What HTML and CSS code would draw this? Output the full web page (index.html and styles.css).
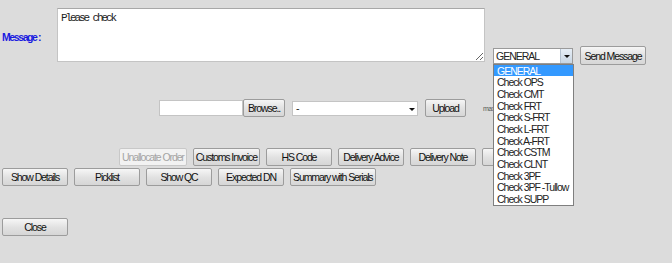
FILE: index.html
```html
<!DOCTYPE html>
<html lang="en">
<head>
  <meta charset="UTF-8" />
  <title>Order Messages</title>
  <link rel="stylesheet" href="styles.css">
</head>
<body>
  <div class="page">
    <div class="msg-row">
      <label class="msg-label" for="msgText">Message :</label>
      <textarea id="msgText" class="msg-text">Please check</textarea>
      <div class="send-group">
        <div class="combo">
          <span class="combo-value">GENERAL</span>
          <span class="combo-arrow"></span>
          <ul class="combo-list">
            <li class="selected">GENERAL</li>
            <li>Check OPS</li>
            <li>Check CMT</li>
            <li>Check FRT</li>
            <li>Check S-FRT</li>
            <li>Check L-FRT</li>
            <li>Check A-FRT</li>
            <li>Check CSTM</li>
            <li>Check CLNT</li>
            <li>Check 3PF</li>
            <li>Check 3PF -Tullow</li>
            <li>Check SUPP</li>
          </ul>
        </div>
        <button class="btn btn-send">Send Message</button>
      </div>
    </div>

    <div class="upload-row">
      <input type="text" class="file-path" />
      <button class="btn btn-browse">Browse..</button>
      <div class="doc-type">
        <span>-</span>
        <span class="doc-arrow"></span>
      </div>
      <button class="btn btn-upload">Upload</button>
      <span class="max-note">max</span>
    </div>

    <div class="btn-row btn-row-top">
      <button class="btn" disabled>Unallocate Order</button>
      <button class="btn">Customs Invoice</button>
      <button class="btn">HS Code</button>
      <button class="btn">Delivery Advice</button>
      <button class="btn">Delivery Note</button>
      <!-- covered by the open message-type list -->
      <button class="btn" aria-label="Print Label"></button>
    </div>
    <div class="btn-row">
      <button class="btn">Show Details</button>
      <button class="btn">Picklist</button>
      <button class="btn">Show QC</button>
      <button class="btn">Expected DN</button>
      <button class="btn btn-wide">Summary with Serials</button>
    </div>

    <div class="close-row">
      <button class="btn">Close</button>
    </div>
  </div>
</body>
</html>
```

FILE: styles.css
```css
body {
  margin: 0;
  background-color: #dcdcdc;
  font-family: 'Liberation Sans', Arial, sans-serif;
  font-size: 10.5px;
  letter-spacing: -1px;
  color: #222;
}

.page {
  padding: 8px 0 0 2px;
}

/* message row */
.msg-row {
  display: flex;
  align-items: flex-start;
}

.msg-label {
  width: 55px;
  margin-top: 23px;
  color: #1a1ae0;
  font-weight: bold;
  letter-spacing: -1.4px;
}

.msg-text {
  width: 428px;
  height: 54px;
  margin: 0;
  padding: 3px 3px;
  box-sizing: border-box;
  border: 1px solid #c4c4c4;
  border-top-color: #a8a8a8;
  background: #fff;
  font-family: 'Liberation Mono', 'Courier New', monospace;
  font-size: 11px;
  letter-spacing: -2.1px;
  color: #222;
  resize: both;
}

.send-group {
  display: flex;
  align-items: center;
  gap: 7px;
  margin: 38px 0 0 8px;
}

.combo {
  position: relative;
  display: flex;
  align-items: center;
  width: 80px;
  height: 16px;
  box-sizing: border-box;
  border: 1px solid #9a9a9a;
  background: #fff;
}

.combo-value {
  flex: 1;
  padding-left: 2px;
}

.combo-arrow {
  width: 11px;
  height: 14px;
  background: linear-gradient(#e6eef6, #c8d6e4);
  border-left: 1px solid #b4c2d0;
  position: relative;
}

.combo-arrow::after,
.doc-arrow::after {
  content: "";
  position: absolute;
  left: 3px;
  top: 6px;
  border-left: 3px solid transparent;
  border-right: 3px solid transparent;
  border-top: 3px solid #111;
}

.combo-list {
  position: absolute;
  top: 15px;
  left: -1px;
  width: 79px;
  margin: 0;
  padding: 0;
  list-style: none;
  background: #fff;
  border: 1px solid #7f7f7f;
  z-index: 2;
}

.combo-list li {
  height: 11.7px;
  line-height: 12px;
  padding-left: 3px;
  white-space: nowrap;
}

.combo-list li.selected {
  background: #3399ff;
  color: #fff;
}

/* buttons */
.btn {
  height: 18px;
  min-width: 66px;
  padding: 0 2px;
  margin: 0;
  box-sizing: border-box;
  border: 1px solid #9c9c9c;
  border-radius: 2px;
  background: linear-gradient(#f6f6f6, #e2e2e2 50%, #d6d6d6);
  font-family: inherit;
  font-size: 10.5px;
  letter-spacing: -1.1px;
  white-space: nowrap;
  color: #111;
  cursor: pointer;
}

.btn:disabled {
  color: #a4a4a4;
  border-color: #c8c8c8;
  background: #f2f2f2;
  cursor: default;
}

.btn-send {
  height: 19px;
  width: 65px;
  padding: 0;
}

.btn-wide {
  min-width: 78px;
}

/* upload row */
.upload-row {
  display: flex;
  align-items: center;
  margin: 34px 0 0 157px;
  height: 18px;
}

.file-path {
  width: 84px;
  height: 16px;
  margin: 0;
  box-sizing: border-box;
  border: 1px solid #c4c4c4;
  background: #fff;
}

.btn-browse {
  min-width: 0;
  width: 42px;
  padding: 0;
}

.doc-type {
  position: relative;
  display: flex;
  align-items: center;
  width: 126px;
  height: 15px;
  margin-left: 7px;
  box-sizing: border-box;
  border: 1px solid #c4c4c4;
  background: #fff;
  padding-left: 3px;
}

.doc-type span:first-child {
  flex: 1;
}

.doc-arrow {
  position: relative;
  width: 11px;
  height: 13px;
}

.btn-upload {
  min-width: 0;
  width: 41px;
  margin-left: 7px;
}

.max-note {
  margin-left: 17px;
  font-size: 7px;
  letter-spacing: -0.5px;
  color: #555;
}

/* action rows */
.btn-row {
  display: flex;
  gap: 6px;
  margin-top: 2px;
}

.btn-row-top {
  margin: 31px 0 0 117px;
}

.close-row {
  margin-top: 32px;
}
```
